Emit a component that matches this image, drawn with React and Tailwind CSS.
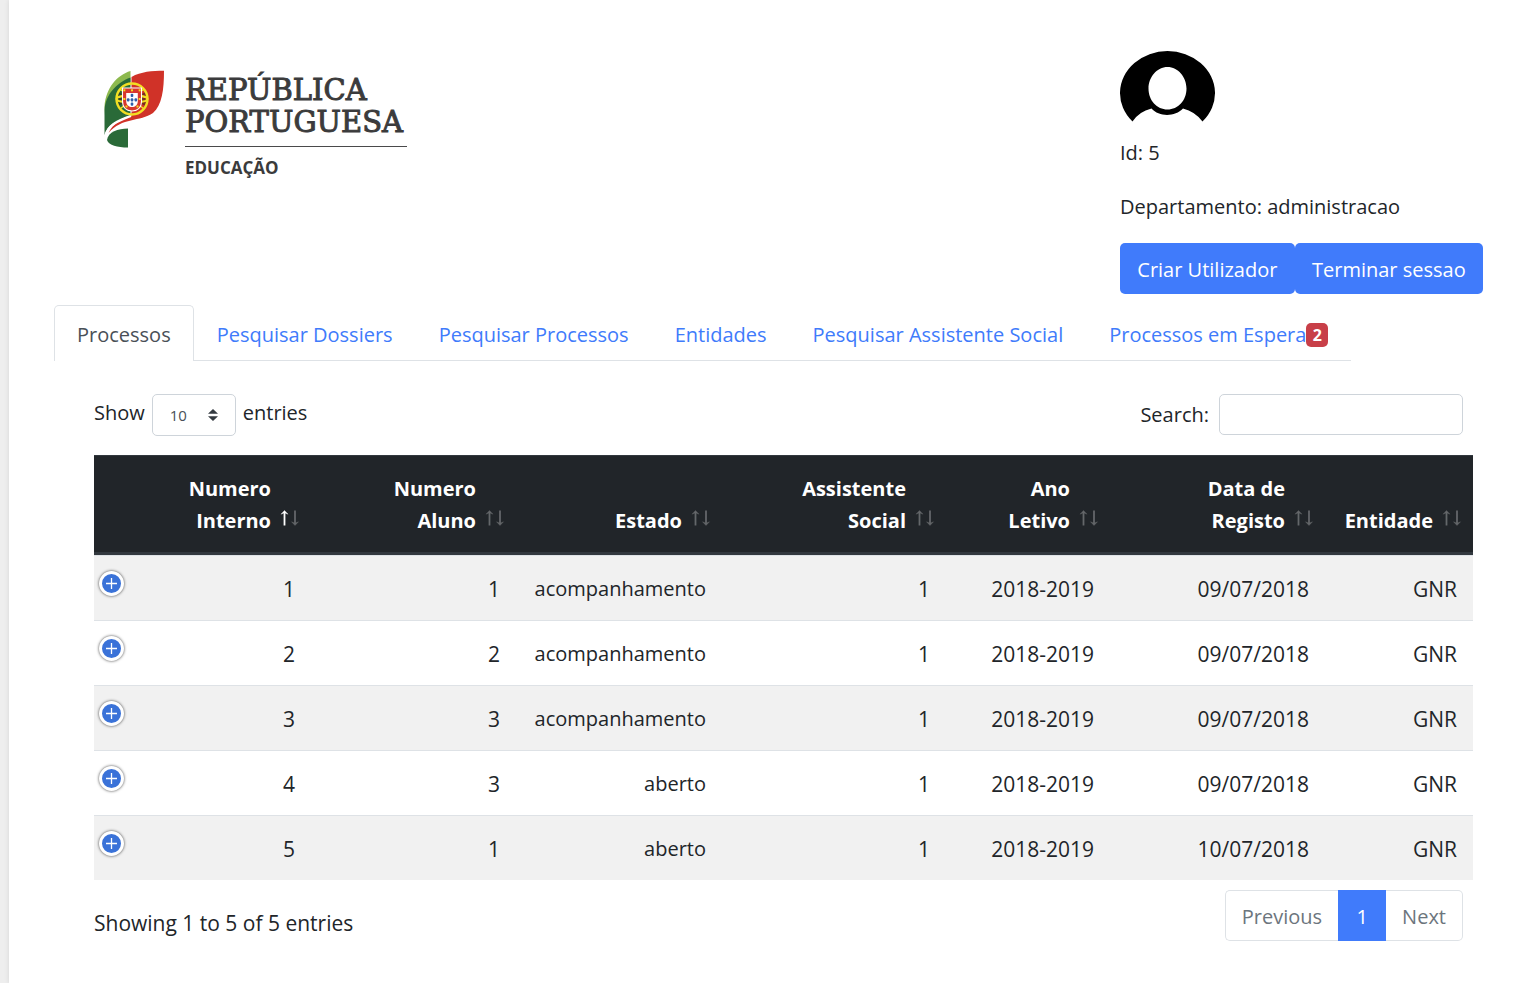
import React from "react";

const tabs = [
  "Processos",
  "Pesquisar Dossiers",
  "Pesquisar Processos",
  "Entidades",
  "Pesquisar Assistente Social",
  "Processos em Espera",
];

const columns = [
  { lines: ["Numero", "Interno"], width: "w-[157px]" },
  { lines: ["Numero", "Aluno"], width: "w-[205px]" },
  { lines: ["Estado"], width: "w-[206px]" },
  { lines: ["Assistente", "Social"], width: "w-[224px]" },
  { lines: ["Ano", "Letivo"], width: "w-[164px]" },
  { lines: ["Data de", "Registo"], width: "w-[215px]" },
  { lines: ["Entidade"], width: "w-[148px]" },
];

const rows = [
  ["1", "1", "acompanhamento", "1", "2018-2019", "09/07/2018", "GNR"],
  ["2", "2", "acompanhamento", "1", "2018-2019", "09/07/2018", "GNR"],
  ["3", "3", "acompanhamento", "1", "2018-2019", "09/07/2018", "GNR"],
  ["4", "3", "aberto", "1", "2018-2019", "09/07/2018", "GNR"],
  ["5", "1", "aberto", "1", "2018-2019", "10/07/2018", "GNR"],
];

function Emblem() {
  return (
    <svg width="62" height="80" viewBox="0 0 62 80" aria-hidden="true">
      <path d="M26.500 1 C13 5 2 18 0.500 36 L1 46 C4 27 14 16 26.500 12 Z" fill="#8db94e" />
      <path d="M26.500 7.500 C12 13 1.500 25 0.500 40 L0.500 66 C3 54 12 50 26.500 45 Z" fill="#2a6a38" />
      <path d="M27.500 7 C37 1.500 48 1 60 0.800 C60 20 58 35 49 43 C36 52 18 47 4.500 63 C9 53 18 49.500 27.500 46 Z" fill="#d03228" />
      <path d="M24 58.500 L24 77.500 C13 77.500 5 75.500 3 70 C4 62 14 58.500 24 58.500 Z" fill="#2a6a38" />
      <path d="M0.500 67 C4 55 13 51.500 27 46" fill="none" stroke="#fff" strokeWidth="1.800" />
      <path d="M14.500 22 Q28 30 41.500 22 V36 Q28 28 14.500 36 Z" fill="#3a2a1c" opacity="0.600" />
      <circle cx="28" cy="29" r="15.500" fill="none" stroke="#f2de23" strokeWidth="2.400" />
      <ellipse cx="28" cy="29" rx="15.500" ry="3.500" fill="none" stroke="#f2de23" strokeWidth="1.800" />
      <path d="M16 19 L40 39 M40 19 L16 39" stroke="#f2de23" strokeWidth="1.400" />
      <path d="M18.500 18 H37.500 V31 C37.500 38 33 41 28 41 C23 41 18.500 38 18.500 31 Z" fill="#d8372d" stroke="#fff" strokeWidth="1.100" />
      <path d="M22.200 23 H33.800 V31 C33.800 35 31 37 28 37 C25 37 22.200 35 22.200 31 Z" fill="#fff" />
      <g fill="#2f5ea8">
        <rect x="26.700" y="23.800" width="2.600" height="3.200" rx="1" />
        <rect x="26.700" y="28.200" width="2.600" height="3.200" rx="1" />
        <rect x="26.700" y="32.600" width="2.600" height="3.200" rx="1" />
        <rect x="22.900" y="28.200" width="2.600" height="3.200" rx="1" />
        <rect x="30.500" y="28.200" width="2.600" height="3.200" rx="1" />
      </g>
      <g fill="#f2de23">
        <rect x="19.300" y="19.300" width="2" height="2" />
        <rect x="27" y="19.300" width="2" height="2" />
        <rect x="34.700" y="19.300" width="2" height="2" />
        <rect x="19.300" y="28" width="2" height="2" />
        <rect x="34.700" y="28" width="2" height="2" />
        <rect x="21.500" y="35.500" width="2" height="2" />
        <rect x="32.500" y="35.500" width="2" height="2" />
      </g>
    </svg>
  );
}

function Logo() {
  return (
    <div className="mt-5 ml-[50px] flex items-start gap-[19px] text-[#3b3b3c]">
      <Emblem />
      <div className="min-w-[222px]">
        <div className="pt-1 font-['DejaVu_Serif',serif] text-[29px] leading-8 [-webkit-text-stroke:1px_#3b3b3c]">
          <div>REPÚBLICA</div>
          <div>PORTUGUESA</div>
        </div>
        <div className="mt-2 border-t border-[#4a4a4b] pt-[9px] text-[17px] leading-6 font-bold">EDUCAÇÃO</div>
      </div>
    </div>
  );
}

function Avatar() {
  return (
    <svg width="95" height="75" viewBox="0 0 95 75" aria-hidden="true">
      <path
        fillRule="evenodd"
        d="M12.500 71.500 A47.500 42 0 1 1 82.500 71.500 Q75 61.500 63 58.500 C55 67 39 67 31.500 58.500 Q19 61.500 12.500 71.500 Z M47.500 17 C37 17 28.500 27 28.500 38.500 C28.500 50.500 37 59.500 47.500 59.500 C58 59.500 66.500 50.500 66.500 38.500 C66.500 27 58 17 47.500 17 Z"
      />
    </svg>
  );
}

function SortArrows({ ascending }) {
  return (
    <svg width="20" height="16" viewBox="0 0 20 16" fill="none" className="mb-[11px] shrink-0" aria-hidden="true">
      <g stroke={ascending ? "#ffffff" : "#64676a"} fill={ascending ? "#ffffff" : "#64676a"}>
        <path d="M4.500 15.500V2" strokeWidth="1.800" />
        <path d="M1 4.200L4.500 0.500L8 4.200L4.500 2.800Z" strokeWidth="0.400" />
      </g>
      <g stroke="#64676a" fill="#64676a">
        <path d="M15 0.500V14" strokeWidth="1.800" />
        <path d="M11.500 11.800L15 15.500L18.500 11.800L15 13.200Z" strokeWidth="0.400" />
      </g>
    </svg>
  );
}

export default function App() {
  return (
    <div className="min-h-screen bg-[#eeeeee] pl-[9px] font-['Open_Sans','Noto_Sans',sans-serif] text-[20px] leading-8 text-[#212529]">
      <main className="min-h-screen bg-white pt-[50px] pr-[50px] pb-10 pl-[45px] shadow-[0_0_5px_rgba(0,0,0,0.1)]">
        <header className="flex items-start justify-between">
          <Logo />
          <div className="w-[363px]">
            <Avatar />
            <p className="mt-3">Id: 5</p>
            <p className="mt-[22px]">Departamento: administracao</p>
            <div className="mt-5 flex">
              <button className="h-[51px] flex-auto rounded-[5px] bg-[#407bfb] px-4 pt-[2px] text-white">Criar Utilizador</button>
              <button className="h-[51px] flex-auto rounded-[5px] bg-[#407bfb] px-4 pt-[2px] text-white">Terminar sessao</button>
            </div>
          </div>
        </header>

        <nav className="mt-[11px] flex w-fit border-b border-[#dee2e6]">
          {tabs.map((tab, i) => (
            <a
              key={tab}
              href="#"
              className={
                i === 0
                  ? "-mb-px flex h-14 items-center rounded-t-[5px] border border-b-0 border-[#dee2e6] bg-white px-[22px] pt-[2px] text-[#495057]"
                  : "-mb-px flex h-14 items-center border border-transparent px-[22px] pt-[3px] text-[#407bfb]"
              }
            >
              {tab}
              {i === 5 && (
                <span className="flex h-6 w-[22px] items-center justify-center rounded-[5px] bg-[#c83f48] text-base font-bold text-white">
                  2
                </span>
              )}
            </a>
          ))}
        </nav>

        <section className="mt-[33px] ml-10 mr-[10px]">
          <div className="flex items-start justify-between pr-[10px]">
            <label className="flex items-start gap-[7px]">
              <span className="mt-[3px]">Show</span>
              <span className="relative flex">
                <select className="h-[42px] w-[84px] appearance-none rounded-[5px] border border-[#ced4da] bg-white pl-[17px] text-[15px] text-[#495057]">
                  <option>10</option>
                </select>
                <svg width="10" height="12" viewBox="0 0 10 12" className="pointer-events-none absolute top-[15px] right-[18px]" fill="#343a40" aria-hidden="true">
                  <path d="M0 4.800L5 0L10 4.800Z M0 7.200L5 12L10 7.200Z" />
                </svg>
              </span>
              <span className="mt-[3px]">entries</span>
            </label>
            <label className="flex items-center gap-[10px]">
              Search:
              <input type="text" className="h-[41px] w-[244px] rounded-[5px] border border-[#ced4da] bg-white px-3 text-lg" />
            </label>
          </div>

          <table className="mt-[19px] w-full table-fixed border-separate border-spacing-0 text-right">
            <colgroup>
              <col className="w-[60px]" />
              {columns.map((c) => (
                <col key={c.lines.join(" ")} className={c.width} />
              ))}
            </colgroup>
            <thead className="bg-[#212529] text-white">
              <tr className="h-[100px]">
                <th aria-label="Detalhes" className="border-t border-b-[3px] border-[#32383e]" />
                {columns.map((c, i) => (
                  <th
                    key={c.lines.join(" ")}
                    className="border-t border-b-[3px] border-[#32383e] pr-[11px] pb-[15px] align-bottom"
                  >
                    <button className="ml-auto flex items-end gap-[9px] text-right font-bold">
                      <span>
                        {c.lines.map((l) => (
                          <span key={l} className="block whitespace-nowrap">
                            {l}
                          </span>
                        ))}
                      </span>
                      <SortArrows ascending={i === 0} />
                    </button>
                  </th>
                ))}
              </tr>
            </thead>
            <tbody>
              {rows.map((row) => (
                <tr key={row[0]} className="h-[65px] odd:bg-[#f1f1f1]">
                  <td className="border-t border-[#dee2e6] pt-[15px] pl-[5px] align-top">
                    <button
                      aria-label="Expandir"
                      className="flex size-[25px] items-center justify-center rounded-full border-[3px] border-white bg-[#3a72d8] shadow-[0_0_3px_#444]"
                    >
                      <svg width="11" height="11" viewBox="0 0 11 11" stroke="#fff" strokeWidth="1.300" aria-hidden="true">
                        <path d="M5.500 0V11M0 5.500H11" />
                      </svg>
                    </button>
                  </td>
                  {row.map((cell, i) => (
                    <td
                      key={i}
                      className={
                        i === 2
                          ? "border-t border-[#dee2e6] pt-[2px] pr-4"
                          : "border-t border-[#dee2e6] pt-[2px] pr-4 text-[21px]"
                      }
                    >
                      {cell}
                    </td>
                  ))}
                </tr>
              ))}
            </tbody>
          </table>

          <div className="mt-[10px] flex items-start justify-between pr-[10px]">
            <p className="mt-[17px] text-[21px]">Showing 1 to 5 of 5 entries</p>
            <div className="flex h-[51px] text-[#6c757d]">
              <button className="rounded-l-[5px] border border-r-0 border-[#dee2e6] px-4 pt-[2px]">Previous</button>
              <button className="w-12 bg-[#407bfb] pt-[2px] text-white">1</button>
              <button className="rounded-r-[5px] border border-l-0 border-[#dee2e6] px-4 pt-[2px]">Next</button>
            </div>
          </div>
        </section>
      </main>
    </div>
  );
}
